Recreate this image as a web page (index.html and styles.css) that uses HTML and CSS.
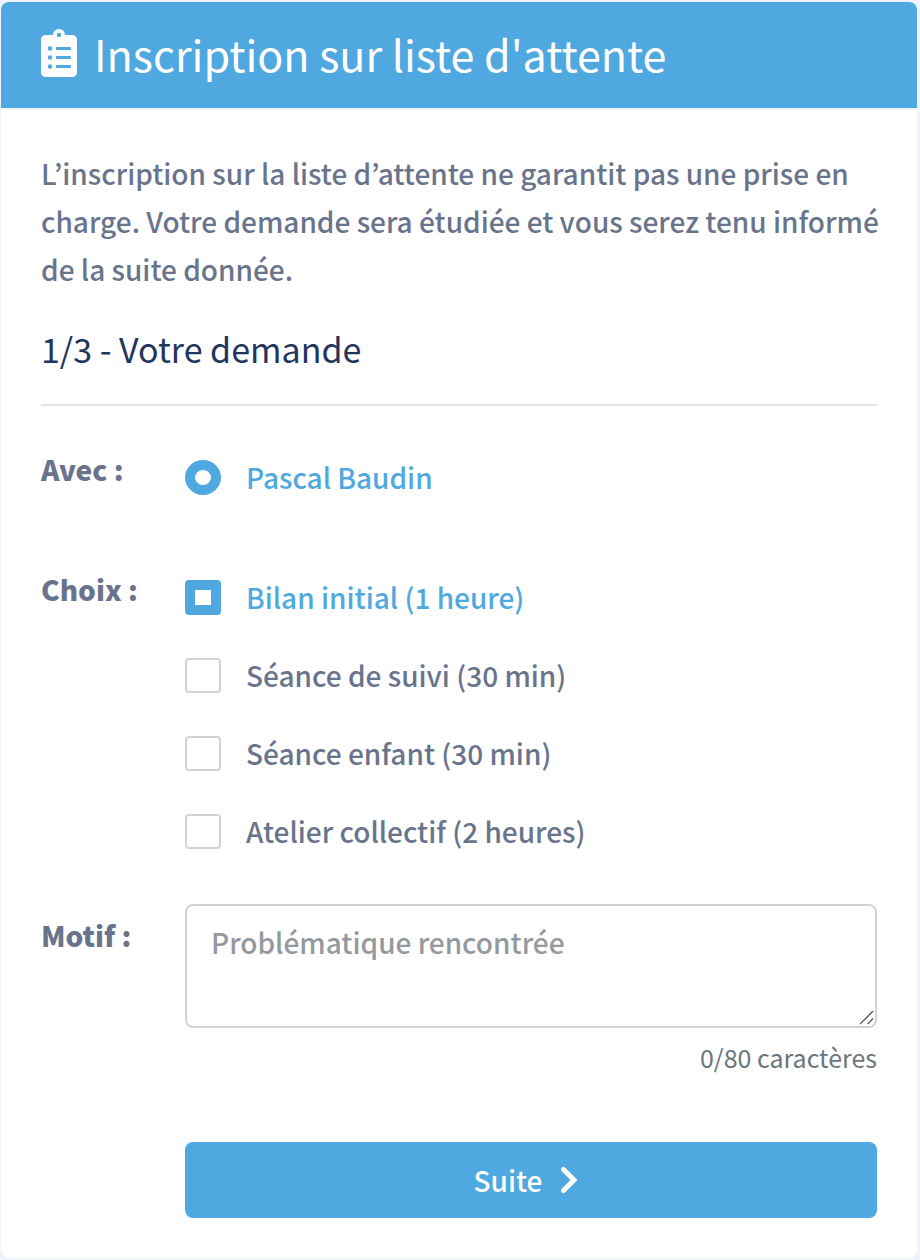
FILE: index.html
```
<!DOCTYPE html>
<html lang="fr">
    <head>
        <meta charset="utf-8">
        <meta name="viewport" content="width=device-width, initial-scale=1">
        <title>Inscription sur liste d'attente</title>
        <link rel="stylesheet" href="styles.css">
    </head>
    <body>
        <main class="card">
            <header class="card-header">
                <svg class="icon-clipboard" viewBox="0 0 36 48" aria-hidden="true">
                    <path fill="#fff" fill-rule="evenodd" d="M4.500 6H12a6 6 0 0 1 12 0h7.500A4.500 4.500 0 0 1 36 10.500v33A4.500 4.500 0 0 1 31.500 48h-27A4.500 4.500 0 0 1 0 43.500v-33A4.500 4.500 0 0 1 4.500 6zM18 3.800a2.200 2.200 0 1 0 0 4.400a2.200 2.200 0 1 0 0-4.400zM9 17.200a2.300 2.300 0 1 0 0 4.600a2.300 2.300 0 1 0 0-4.600zM9 26.200a2.300 2.300 0 1 0 0 4.600a2.300 2.300 0 1 0 0-4.600zM9 35.200a2.300 2.300 0 1 0 0 4.600a2.300 2.300 0 1 0 0-4.600zM15.700 18h13.600a.7.7 0 0 1 .7.7v1.600a.7.7 0 0 1-.7.7H15.700a.7.7 0 0 1-.7-.7v-1.600a.7.7 0 0 1 .7-.7zM15.700 27h13.600a.7.7 0 0 1 .7.7v1.600a.7.7 0 0 1-.7.7H15.700a.7.7 0 0 1-.7-.7v-1.600a.7.7 0 0 1 .7-.7zM15.700 36h13.600a.7.7 0 0 1 .7.7v1.600a.7.7 0 0 1-.7.7H15.700a.7.7 0 0 1-.7-.7v-1.600a.7.7 0 0 1 .7-.7z"/>
                </svg>
                <h1>Inscription sur liste d'attente</h1>
            </header>
            <form class="card-body">
                <p class="intro">L’inscription sur la liste d’attente ne garantit pas une prise en charge. Votre demande sera étudiée et vous serez tenu informé de la suite donnée.</p>
                <h2>1/3 - Votre demande</h2>
                <hr>

                <div class="row" role="radiogroup" aria-labelledby="label-avec">
                    <div class="label" id="label-avec">Avec :</div>
                    <div class="options">
                        <label class="option"><input type="radio" name="avec" checked><span>Pascal Baudin</span></label>
                    </div>
                </div>

                <div class="row row-choix" role="group" aria-labelledby="label-choix">
                    <div class="label" id="label-choix">Choix :</div>
                    <div class="options">
                        <label class="option"><input type="checkbox" name="bilan" checked><span>Bilan initial (1 heure)</span></label>
                        <label class="option"><input type="checkbox" name="suivi"><span>Séance de suivi (30 min)</span></label>
                        <label class="option"><input type="checkbox" name="enfant"><span>Séance enfant (30 min)</span></label>
                        <label class="option"><input type="checkbox" name="atelier"><span>Atelier collectif (2 heures)</span></label>
                    </div>
                </div>

                <div class="row row-motif">
                    <label class="label" for="motif">Motif :</label>
                    <div class="field">
                        <textarea id="motif" rows="2" maxlength="80" placeholder="Problématique rencontrée"></textarea>
                        <div class="counter">0/80 caractères</div>
                    </div>
                </div>

                <div class="row row-submit">
                    <button class="submit" type="submit">
                        Suite
                        <svg class="icon-chevron" viewBox="0 0 18 28" aria-hidden="true">
                            <path fill="none" stroke="#fff" stroke-width="5" stroke-linecap="round" stroke-linejoin="miter" d="M3.500 3.500L14 14L3.500 24.500"/>
                        </svg>
                    </button>
                </div>
            </form>
        </main>
    </body>
</html>
```

FILE: styles.css
```
* {
    box-sizing: border-box;
}

body {
    background: #eff4fc;
    color: #69748c;
    font-family: "Noto Sans CJK KR", "Noto Sans", sans-serif;
    font-size: 28px;
    font-weight: 500;
    line-height: 48px;
    margin: 0;
    padding: 2px 3px 2px 1px;
}

.card {
    background: #fff;
    border-radius: 8px;
    overflow: hidden;
}

.card-header {
    align-items: center;
    background: #4fa8e0;
    border-bottom: 2px solid #eff4fc;
    color: #fff;
    display: flex;
    gap: 17px;
    padding: 23px 40px 27px;
}

h1 {
    font-size: 43px;
    font-weight: 400;
    line-height: 56px;
    margin: 0;
}

.icon-clipboard {
    flex: none;
    height: 48px;
    width: 36px;
}

.card-body {
    padding: 39px 40px 40px;
}

.intro {
    margin: 0 -8px 32px 0;
}

h2 {
    color: #22365d;
    font-size: 34px;
    font-weight: 400;
    line-height: 48px;
    margin: 0;
}

hr {
    border: 0;
    border-top: 2px solid #e5e5e5;
    margin: 31px 0 39px;
}

.row {
    display: grid;
    grid-template-columns: 144px 1fr;
    margin-bottom: 42px;
}

.row-choix {
    margin-bottom: 27px;
}

.row-motif {
    margin-bottom: 67px;
}

.row-submit {
    margin-bottom: 0;
}

.label {
    font-weight: 900;
}

.options {
    padding-top: 8px;
}

.option {
    align-items: center;
    cursor: pointer;
    display: flex;
    gap: 25px;
    margin-bottom: 30px;
}

.option:last-child {
    margin-bottom: 22px;
}

.option input {
    appearance: none;
    background: #fff;
    border: 2px solid #cfd4da;
    border-radius: 4px;
    flex: none;
    height: 35px;
    margin: 0;
    width: 36px;
}

.option input[type=radio] {
    border-radius: 50%;
}

.option input:checked {
    border: 10px solid #4fa8e0;
}

.option input:checked + span {
    color: #4fa8e0;
}

.field {
    min-width: 0;
}

textarea {
    border: 2px solid #cfd4da;
    border-radius: 8px;
    color: #69748c;
    display: block;
    font: inherit;
    padding: 12px 24px;
    resize: vertical;
    width: 100%;
}

textarea::placeholder {
    color: #95999e;
}

textarea::-webkit-resizer {
    background: url("data:image/svg+xml,%3Csvg xmlns='http://www.w3.org/2000/svg' viewBox='0 0 16 16'%3E%3Cpath d='M0 14L14 0M8 14L14 8' stroke='%23555' stroke-width='1.500'/%3E%3C/svg%3E") no-repeat center / 100% 100%;
}

.row-motif .label {
    padding-top: 7px;
}

.counter {
    color: #6c757d;
    font-size: 25px;
    font-weight: 400;
    line-height: 36px;
    margin-top: 11px;
    text-align: right;
}

.submit {
    align-items: center;
    background: #4fa8e0;
    border: 0;
    border-radius: 8px;
    color: #fff;
    cursor: pointer;
    display: flex;
    font: inherit;
    gap: 18px;
    grid-column: 2;
    justify-content: center;
    padding: 14px 34px 14px 24px;
}

.icon-chevron {
    height: 28px;
    width: 18px;
}
```
